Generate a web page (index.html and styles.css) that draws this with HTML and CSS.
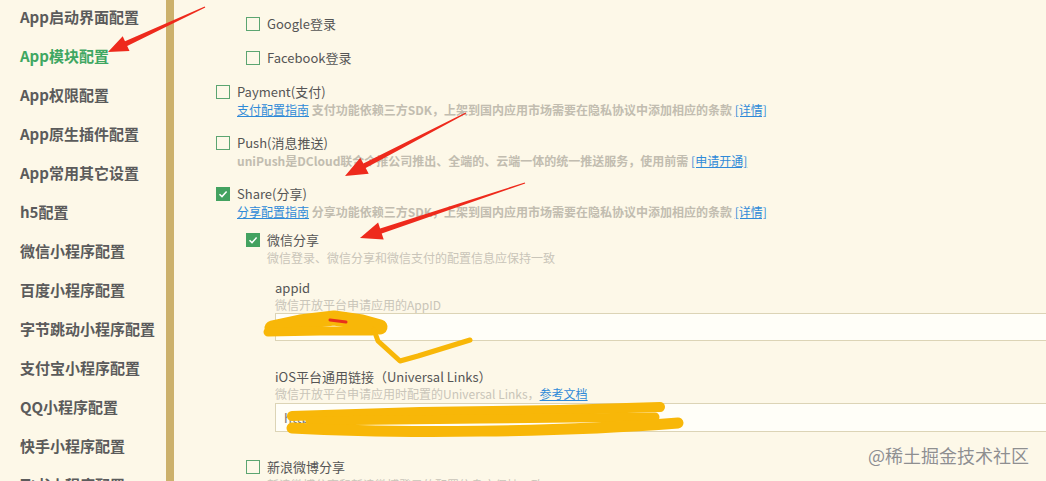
FILE: index.html
```html
<!DOCTYPE html>
<html lang="zh-CN">
<head>
<meta charset="utf-8">
<title>App模块配置</title>
<link rel="stylesheet" href="styles.css">
</head>
<body>
<div class="page">
  <aside class="sidebar">
    <ul class="nav">
      <li>App启动界面配置</li>
      <li class="active">App模块配置</li>
      <li>App权限配置</li>
      <li>App原生插件配置</li>
      <li>App常用其它设置</li>
      <li>h5配置</li>
      <li>微信小程序配置</li>
      <li>百度小程序配置</li>
      <li>字节跳动小程序配置</li>
      <li>支付宝小程序配置</li>
      <li>QQ小程序配置</li>
      <li>快手小程序配置</li>
      <li>飞书小程序配置</li>
    </ul>
  </aside>
  <div class="divider"></div>
  <main class="content">
    <div class="sub">
      <div class="opt"><span class="cb"></span>Google登录</div>
      <div class="opt gap"><span class="cb"></span>Facebook登录</div>
    </div>

    <div class="module">
      <div class="opt"><span class="cb"></span>Payment(支付)</div>
      <div class="desc"><a class="link">支付配置指南</a> <span class="strong">支付功能依赖三方SDK，上架到国内应用市场需要在隐私协议中添加相应的条款</span> <a class="link">[详情]</a></div>
    </div>

    <div class="module">
      <div class="opt"><span class="cb"></span>Push(消息推送)</div>
      <div class="desc"><span class="strong">uniPush是DCloud联合个推公司推出、全端的、云端一体的统一推送服务，使用前需</span> <a class="link">[申请开通]</a></div>
    </div>

    <div class="module">
      <div class="opt"><span class="cb on"><svg viewBox="0 0 14 14" width="14" height="14"><path d="M3.5 7.2 L6 9.6 L10.6 4.6" fill="none" stroke="#fff" stroke-width="1.5"/></svg></span>Share(分享)</div>
      <div class="desc"><a class="link">分享配置指南</a> <span class="strong">分享功能依赖三方SDK，上架到国内应用市场需要在隐私协议中添加相应的条款</span> <a class="link">[详情]</a></div>

      <div class="sub wx">
        <div class="opt"><span class="cb on"><svg viewBox="0 0 14 14" width="14" height="14"><path d="M3.5 7.2 L6 9.6 L10.6 4.6" fill="none" stroke="#fff" stroke-width="1.5"/></svg></span>微信分享</div>
        <div class="desc light">微信登录、微信分享和微信支付的配置信息应保持一致</div>

        <div class="field first">
          <div class="label">appid</div>
          <div class="fdesc">微信开放平台申请应用的AppID</div>
          <div class="input"></div>
        </div>

        <div class="field">
          <div class="label">iOS平台通用链接（Universal Links）</div>
          <div class="fdesc">微信开放平台申请应用时配置的Universal Links，<a class="link">参考文档</a></div>
          <div class="input tall">https://</div>
        </div>

        <div class="opt sina"><span class="cb"></span>新浪微博分享</div>
        <div class="desc light">新浪微博分享和新浪微博登录的配置信息应保持一致</div>
      </div>
    </div>
  </main>

  <svg class="marks" width="1046" height="481" viewBox="0 0 1046 481">
    <g fill="#ee2a1c">
      <polygon points="205.3,7.6 127.2,45.9 129.5,50.9 108,52 122.7,36.3 125.0,41.3 204.7,6.4"/>
      <polygon points="466.3,113.6 365.7,168.0 368.7,173.8 345,176 360.3,157.8 363.3,163.6 465.7,112.4"/>
      <polygon points="525.2,183.6 381.7,233.4 383.7,239.5 360,238 378.1,222.5 380.1,228.6 524.8,182.4"/>
    </g>
    <g fill="none" stroke="#f8b708" stroke-linecap="round" stroke-linejoin="round">
      <path d="M272 328 L300 322 L334 318 L362 322 L380 327" stroke-width="15"/>
      <path d="M268 332 L320 331 L372 331" stroke-width="9"/>
      <path d="M332 317 L345 315" stroke-width="6"/>
      <path d="M374 330 L378 341 L400 361 L418 356 L470 340" stroke-width="5"/>
      <path d="M292 416 L420 412 L560 410 L660 407" stroke-width="10"/>
      <path d="M310 421 L480 419 L655 417" stroke-width="9"/>
      <path d="M292 428 C400 434 560 432 678 423" stroke-width="11"/>
    </g>
    <path d="M330 320 L346 322" stroke="#e8301c" stroke-width="3" stroke-linecap="round"/>
  </svg>

  <div class="watermark">@稀土掘金技术社区</div>
</div>
</body>
</html>
```

FILE: styles.css
```css
html, body {
  margin: 0;
  padding: 0;
}

body {
  background: #fdf8e8;
  font-family: "Noto Sans CJK SC", "Noto Sans", sans-serif;
  color: #555;
  overflow: hidden;
}

.page {
  position: relative;
  display: flex;
  height: 481px;
  overflow: hidden;
}

.sidebar {
  width: 166px;
  flex: none;
}

.nav {
  list-style: none;
  margin: -3px 0 0;
  padding: 0 0 0 20px;
}

.nav li {
  height: 39px;
  line-height: 39px;
  font-size: 15px;
  font-weight: 700;
  color: #5b5b5b;
  white-space: nowrap;
}

.nav li.active {
  color: #3fa762;
}

.divider {
  width: 8px;
  flex: none;
  background: #ccb16c;
}

.content {
  flex: 1;
  min-width: 0;
  padding: 14px 0 0 42px;
  font-size: 13px;
}

.opt {
  display: flex;
  align-items: center;
  height: 20px;
  line-height: 20px;
  white-space: nowrap;
  color: #555;
}

.cb {
  width: 12px;
  height: 12px;
  border: 1px solid #5ca571;
  margin-right: 7px;
  flex: none;
  display: flex;
}

.cb.on {
  width: 14px;
  height: 14px;
  border: 0;
  background: #43a260;
}

.sub {
  padding-left: 30px;
}

.gap {
  margin-top: 14px;
}

.module {
  margin-top: 14px;
}

.desc {
  padding-left: 21px;
  margin-top: -1px;
  height: 18px;
  line-height: 18px;
  font-size: 12px;
  white-space: nowrap;
  color: #c2bdb0;
}

.strong {
  font-weight: 700;
}

.desc.light {
  color: #c9c5b9;
}

.link {
  color: #2f8ad8;
  text-decoration: underline;
}

.sub.wx {
  margin-top: 9px;
}

.field {
  margin-left: 29px;
  margin-top: 26px;
}

.field.first {
  margin-top: 11px;
}

.label {
  height: 20px;
  line-height: 20px;
  color: #555;
  white-space: nowrap;
}

.fdesc {
  margin-top: -1px;
  height: 16px;
  line-height: 16px;
  font-size: 12px;
  color: #c9c5b9;
  white-space: nowrap;
}

.input {
  box-sizing: border-box;
  width: 820px;
  height: 28px;
  margin-top: 0;
  border: 1px solid #dcd4b6;
  background: #fffef8;
  padding: 0 8px;
  line-height: 26px;
  font-size: 13px;
  color: #777;
}

.input.tall {
  height: 29px;
  margin-top: 1px;
  line-height: 27px;
}

.sina {
  margin-top: 25px;
}

.marks {
  position: absolute;
  left: 0;
  top: 0;
  pointer-events: none;
}

.watermark {
  position: absolute;
  right: 17px;
  top: 444px;
  font-size: 18px;
  line-height: 22px;
  color: #8f8f8f;
  text-shadow: 0 0 1px #fff;
  white-space: nowrap;
}
```
